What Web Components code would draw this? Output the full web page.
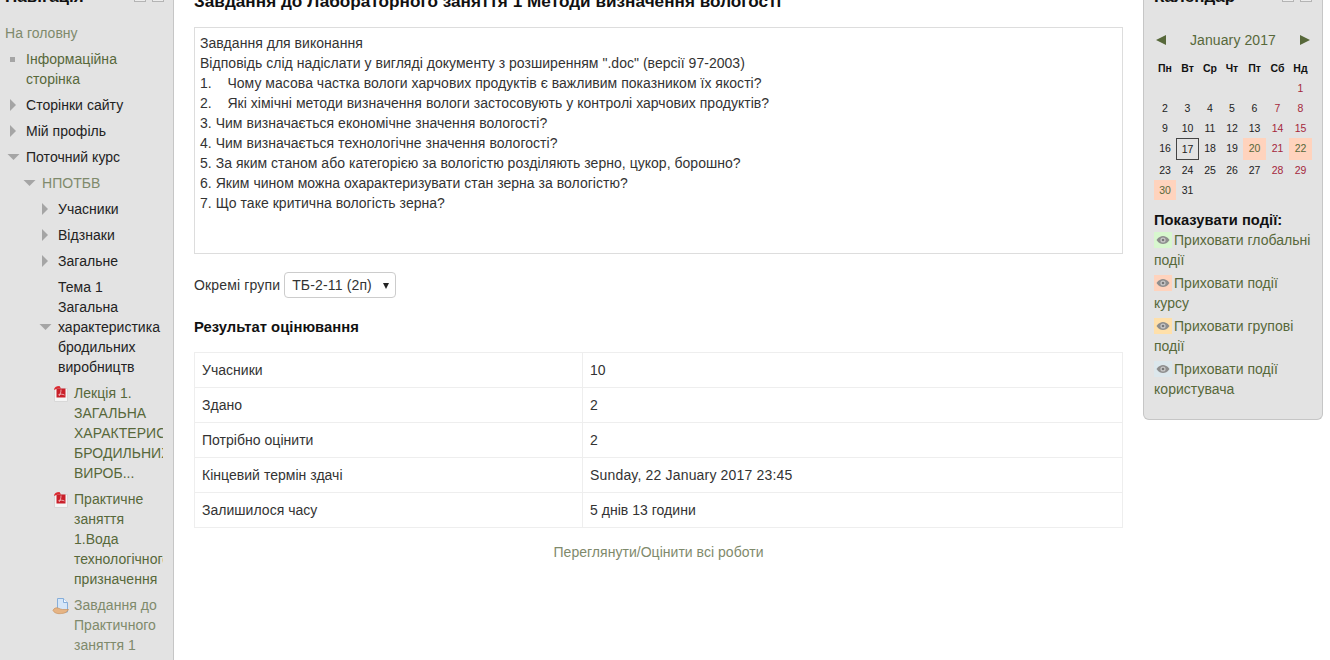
<!DOCTYPE html>
<html lang="uk">
<head>
<meta charset="utf-8">
<title>Завдання</title>
<style>
html, body { margin: 0; height: 660px; overflow: hidden; background: #fff; }
body { font: 14px/20px "Liberation Sans", Arial, sans-serif; color: #333; letter-spacing: .03px; }
</style>
</head>
<body>
<course-page>
	<side-block slot="left" heading="Навігація" side="left">
		<nav-item depth="0" kind="none" tone="dim" flush>На головну</nav-item>
		<nav-item depth="0" kind="bullet" tone="link">Інформаційна сторінка</nav-item>
		<nav-item depth="0" kind="closed">Сторінки сайту</nav-item>
		<nav-item depth="0" kind="closed">Мій профіль</nav-item>
		<nav-item depth="0" kind="open">Поточний курс</nav-item>
		<nav-item depth="1" kind="open" tone="dim">НПОТБВ</nav-item>
		<nav-item depth="2" kind="closed">Учасники</nav-item>
		<nav-item depth="2" kind="closed">Відзнаки</nav-item>
		<nav-item depth="2" kind="closed">Загальне</nav-item>
		<nav-item depth="2" kind="open">Тема 1 Загальна характеристика бродильних виробництв</nav-item>
		<nav-item depth="3" kind="pdf" tone="link">Лекція 1. ЗАГАЛЬНА ХАРАКТЕРИСТИКА БРОДИЛЬНИХ ВИРОБ...</nav-item>
		<nav-item depth="3" kind="pdf" tone="link">Практичне заняття 1.Вода технологічного призначення</nav-item>
		<nav-item depth="3" kind="assign" tone="dim">Завдання до Практичного заняття 1</nav-item>
	</side-block>

	<assign-intro heading="Завдання до Лабораторного заняття 1 Методи визначення вологості">
		<div>Завдання для виконання</div>
		<div>Відповідь слід надіслати у вигляді документу з розширенням ".doc" (версії 97-2003)</div>
		<div>1.&nbsp;&nbsp;&nbsp;&nbsp;Чому масова частка вологи харчових продуктів є важливим показником їх якості?</div>
		<div>2.&nbsp;&nbsp;&nbsp;&nbsp;Які хімічні методи визначення вологи застосовують у контролі харчових продуктів?</div>
		<div>3. Чим визначається економічне значення вологості?</div>
		<div>4. Чим визначається технологічне значення вологості?</div>
		<div>5. За яким станом або категорією за вологістю розділяють зерно, цукор, борошно?</div>
		<div>6. Яким чином можна охарактеризувати стан зерна за вологістю?</div>
		<div>7. Що таке критична вологість зерна?</div>
	</assign-intro>
	<group-select label="Окремі групи" value="ТБ-2-11 (2п)"></group-select>
	<grade-table heading="Результат оцінювання" link="Переглянути/Оцінити всі роботи">
		<grade-row name="Учасники">10</grade-row>
		<grade-row name="Здано">2</grade-row>
		<grade-row name="Потрібно оцінити">2</grade-row>
		<grade-row name="Кінцевий термін здачі"><span style="letter-spacing:.17px">Sunday, 22 January 2017 23:45</span></grade-row>
		<grade-row name="Залишилося часу">5 днів 13 години</grade-row>
	</grade-table>

	<side-block slot="right" heading="Календар" side="right">
		<mini-calendar></mini-calendar>
		<event-key>
			<event-toggle color="#d8f7cf">Приховати глобальні події</event-toggle>
			<event-toggle color="#ffd3bd">Приховати події курсу</event-toggle>
			<event-toggle color="#ffe0aa">Приховати групові події</event-toggle>
			<event-toggle color="#dce7ec">Приховати події користувача</event-toggle>
		</event-key>
	</side-block>
</course-page>

<script>
const LINK = '#57683a'
const DIM = '#7f8a6c'

// the reference is a page scrolled down a little, so the whole grid is pulled up
class CoursePage extends HTMLElement {
	constructor() {
		super()
		this.attachShadow({ mode: 'open' })
		this.shadowRoot.innerHTML = `
      <style>
        :host {
          display: grid;
          grid-template-columns: 174px 1fr 180px;
          padding-right: 7px;
          margin-top: -12px;
          align-items: start;
        }
        main {
          padding: 0 20px;
          min-width: 0;
        }
      </style>
      <slot name="left"></slot>
      <main><slot></slot></main>
      <slot name="right"></slot>
    `
	}
}

class SideBlock extends HTMLElement {
	constructor() {
		super()
		this.attachShadow({ mode: 'open' })
		const heading = this.getAttribute('heading')
		this.shadowRoot.innerHTML = `
      <style>
        :host {
          display: block;
          box-sizing: border-box;
          background: #e3e3e3;
          border: 1px solid #c6c6c6;
        }
        :host([side="left"]) {
          border-width: 0 1px 0 0;
          height: 760px;
          padding: 0 9px 0 5px;
        }
        :host([side="right"]) {
          border-top: 0;
          border-radius: 0 0 6px 6px;
          padding: 0 10px 17px 10px;
        }
        header {
          display: flex;
          align-items: flex-start;
          font-weight: bold;
          font-size: 17px;
          line-height: 18px;
          color: #111;
          white-space: nowrap;
        }
        :host([side="left"]) header { height: 35px; }
        :host([side="right"]) header { height: 42px; }
        h2 {
          flex: 1;
          margin: 0;
          font: inherit;
        }
        .ctl {
          display: flex;
          gap: 6px;
          margin-top: 2px;
        }
        .ctl i {
          display: block;
          box-sizing: border-box;
          width: 12px;
          height: 12px;
          border: 1px solid #b4b4b4;
          background: #ececec;
        }
      </style>
      <header><h2>${heading}</h2><div class="ctl"><i></i><i></i></div></header>
      <slot></slot>
    `
	}
}

const NAV_ICONS = {
	closed: '<svg width="16" height="20" viewBox="0 0 16 20"><path d="M5 4l6 6-6 6z" fill="#a5a5a5"/></svg>',
	open: '<svg width="16" height="20" viewBox="0 0 16 20"><path d="M2.500 7h12l-6 6z" fill="#a5a5a5"/></svg>',
	bullet: '<svg width="16" height="20" viewBox="0 0 16 20"><rect x="5" y="8" width="5" height="5" fill="#a5a5a5"/></svg>',
	pdf: `<svg width="16" height="20" viewBox="0 0 16 20">
      <path d="M1.500 5.500h13v13h-13z" fill="#f5f5f5" stroke="#d8d8d8"/>
      <path d="M1 7C1.200 4.500 3 3 6.500 3L8 5.500H4.500z" fill="#dd2a30"/>
      <rect x="3.500" y="5.500" width="9" height="9" fill="#c9202a"/>
      <path d="M6 13c1.500-2 2-4 2-6.500M5.500 11.500c2-.5 4-.5 6 .5" fill="none" stroke="#f4c9cb" stroke-width=".8"/>
    </svg>`,
	assign: `<svg width="16" height="20" viewBox="0 0 16 20">
      <path d="M4.500 3.500h6l4 4v9.500h-10z" fill="#d5e6f8" stroke="#86aeda"/>
      <path d="M10.500 3.500v4h4" fill="#f4f9ff" stroke="#86aeda"/>
      <path d="M0 15.500c1-2.500 3-3 5-2.500 1.500.5 3 1.500 4.500 1.500 2 0 4 0 6 0-1 2.500-4 4-7 4-3 .5-7 0-8.500-3z" fill="#e6b484" stroke="#c48a52" stroke-width=".6"/>
    </svg>`,
	none: ''
}

class NavItem extends HTMLElement {
	constructor() {
		super()
		this.attachShadow({ mode: 'open' })
		const kind = this.getAttribute('kind')
		const depth = Number(this.getAttribute('depth'))
		const tone = this.getAttribute('tone')
		const color = tone === 'dim' ? DIM : tone === 'link' ? LINK : '#222'
		this.shadowRoot.innerHTML = `
      <style>
        :host {
          display: flex;
          margin: 0 1px 6px 0;
          padding-left: ${depth * 16}px;
          overflow: hidden;
          color: ${color};
        }
        .ic {
          flex: none;
          width: 16px;
          height: 20px;
          margin-right: 5px;
          align-self: ${kind === 'closed' || kind === 'open' ? 'center' : 'flex-start'};
        }
        :host([kind="none"]) .ic { display: none; }
        svg { display: block; overflow: visible; }
        .txt { flex: 1; min-width: 0; }
      </style>
      <div class="ic">${NAV_ICONS[kind]}</div>
      <div class="txt"><slot></slot></div>
    `
	}
}

class AssignIntro extends HTMLElement {
	constructor() {
		super()
		this.attachShadow({ mode: 'open' })
		this.shadowRoot.innerHTML = `
      <style>
        :host { display: block; }
        h2 {
          margin: 0 0 16px;
          padding-top: 3px;
          height: 20px;
          font-size: 17.150px;
          line-height: 20px;
          font-weight: bold;
          color: #111;
          white-space: nowrap;
        }
        .box {
          box-sizing: border-box;
          height: 227px;
          padding: 5px;
          border: 1px solid #ddd;
          color: #333;
        }
      </style>
      <h2>${this.getAttribute('heading')}</h2>
      <div class="box"><slot></slot></div>
    `
	}
}

class GroupSelect extends HTMLElement {
	constructor() {
		super()
		this.attachShadow({ mode: 'open' })
		// native arrow is a chevron here, the reference has a small solid triangle
		const arrow = "url(\"data:image/svg+xml,%3Csvg xmlns='http://www.w3.org/2000/svg' width='6' height='6'%3E%3Cpath d='M0 0h6L3 6z' fill='%23222'/%3E%3C/svg%3E\")"
		this.shadowRoot.innerHTML = `
      <style>
        :host {
          display: flex;
          align-items: center;
          gap: 4px;
          margin-top: 18px;
        }
        span { letter-spacing: .15px; }
        select {
          appearance: none;
          box-sizing: border-box;
          width: 112px;
          height: 26px;
          padding: 0 7px;
          background: #fff ${arrow} no-repeat 98px 10px;
          border: 1px solid #ccc;
          border-radius: 4px;
          font: 14px "Liberation Sans", Arial, sans-serif;
          letter-spacing: .15px;
          color: #333;
        }
      </style>
      <span>${this.getAttribute('label')}</span>
      <select><option>${this.getAttribute('value')}</option></select>
    `
	}
}

class GradeTable extends HTMLElement {
	constructor() {
		super()
		this.attachShadow({ mode: 'open' })
		this.shadowRoot.innerHTML = `
      <style>
        :host { display: block; }
        h3 {
          margin: 19px 0 15px;
          font-size: 14.800px;
          line-height: 20px;
          color: #111;
        }
        .rows { border-top: 1px solid #eee; border-left: 1px solid #eee; border-right: 1px solid #eee; }
        a {
          display: block;
          margin-top: 14px;
          text-align: center;
          color: ${DIM};
          text-decoration: none;
        }
      </style>
      <h3>${this.getAttribute('heading')}</h3>
      <div class="rows"><slot></slot></div>
      <a href="#">${this.getAttribute('link')}</a>
    `
	}
}

class GradeRow extends HTMLElement {
	constructor() {
		super()
		this.attachShadow({ mode: 'open' })
		this.shadowRoot.innerHTML = `
      <style>
        :host {
          display: grid;
          grid-template-columns: 387px 1fr;
          border-bottom: 1px solid #eee;
        }
        div { padding: 7px; }
        .v { border-left: 1px solid #eee; }
      </style>
      <div>${this.getAttribute('name')}</div>
      <div class="v"><slot></slot></div>
    `
	}
}

class MiniCalendar extends HTMLElement {
	constructor() {
		super()
		this.attachShadow({ mode: 'open' })
		const heads = ['Пн', 'Вт', 'Ср', 'Чт', 'Пт', 'Сб', 'Нд']
		const events = [20, 22, 30]
		let cells = heads.map((h) => `<b>${h}</b>`).join('')
		// 1 January 2017 is a Sunday
		for (let i = 0; i < 6; i++) cells += '<span></span>'
		for (let d = 1; d <= 31; d++) {
			const col = (d + 5) % 7
			const cls = []
			if (col > 4) cls.push('we')
			if (events.includes(d)) cls.push('ev')
			if (d === 17) cls.push('today')
			cells += `<span class="${cls.join(' ')}">${d}</span>`
		}
		this.shadowRoot.innerHTML = `
      <style>
        :host { display: block; }
        .head {
          display: flex;
          align-items: center;
          height: 20px;
          color: ${LINK};
        }
        .head div { flex: 1; text-align: center; letter-spacing: .1px; }
        svg { display: block; flex: none; }
        .grid {
          display: grid;
          grid-template-columns: 22px 23px 22px 22px 23px 23px 23px;
          grid-template-rows: 20px 20px 20px 20px 22px 20px 20px;
          margin-top: 8px;
          font-size: 10.500px;
          line-height: 20px;
          text-align: center;
          color: #222;
        }
        b { color: #111; }
        .we { color: #a5283c; }
        .ev { background: #ffd3bd; color: ${LINK}; }
        .today { box-sizing: border-box; border: 1px solid #444; }
      </style>
      <div class="head">
        <svg width="14" height="12" viewBox="0 0 14 12" style="margin-left:1px"><path d="M1 6l10-5v10z" fill="${LINK}"/></svg>
        <div>January 2017</div>
        <svg width="14" height="12" viewBox="0 0 14 12" style="margin-right:1px"><path d="M13 6L3 1v10z" fill="${LINK}"/></svg>
      </div>
      <div class="grid">${cells}</div>
    `
	}
}

class EventKey extends HTMLElement {
	constructor() {
		super()
		this.attachShadow({ mode: 'open' })
		this.shadowRoot.innerHTML = `
      <style>
        :host { display: block; margin-top: 10px; }
        strong { display: block; color: #111; font-size: 14.700px; }
      </style>
      <strong>Показувати події:</strong>
      <slot></slot>
    `
	}
}

class EventToggle extends HTMLElement {
	constructor() {
		super()
		this.attachShadow({ mode: 'open' })
		this.shadowRoot.innerHTML = `
      <style>
        :host { display: block; margin-bottom: 3px; color: ${LINK}; }
        .eye {
          display: inline-block;
          vertical-align: top;
          width: 18px;
          height: 16px;
          margin: 2px 2px 0 0;
          background: ${this.getAttribute('color')};
        }
        svg { display: block; }
      </style>
      <span class="eye"><svg width="18" height="16" viewBox="0 0 18 16">
        <path d="M2.500 8C4.500 5 7 4 9 4s4.500 1 6.500 4C13.500 11 11 12 9 12S4.500 11 2.500 8z" fill="#8e8e8e"/>
        <circle cx="9" cy="8" r="2.600" fill="#c8c8c8"/>
        <circle cx="9" cy="8" r="1.300" fill="#777"/>
      </svg></span><slot></slot>
    `
	}
}

customElements.define('course-page', CoursePage)
customElements.define('side-block', SideBlock)
customElements.define('nav-item', NavItem)
customElements.define('assign-intro', AssignIntro)
customElements.define('group-select', GroupSelect)
customElements.define('grade-table', GradeTable)
customElements.define('grade-row', GradeRow)
customElements.define('mini-calendar', MiniCalendar)
customElements.define('event-key', EventKey)
customElements.define('event-toggle', EventToggle)
</script>
</body>
</html>
